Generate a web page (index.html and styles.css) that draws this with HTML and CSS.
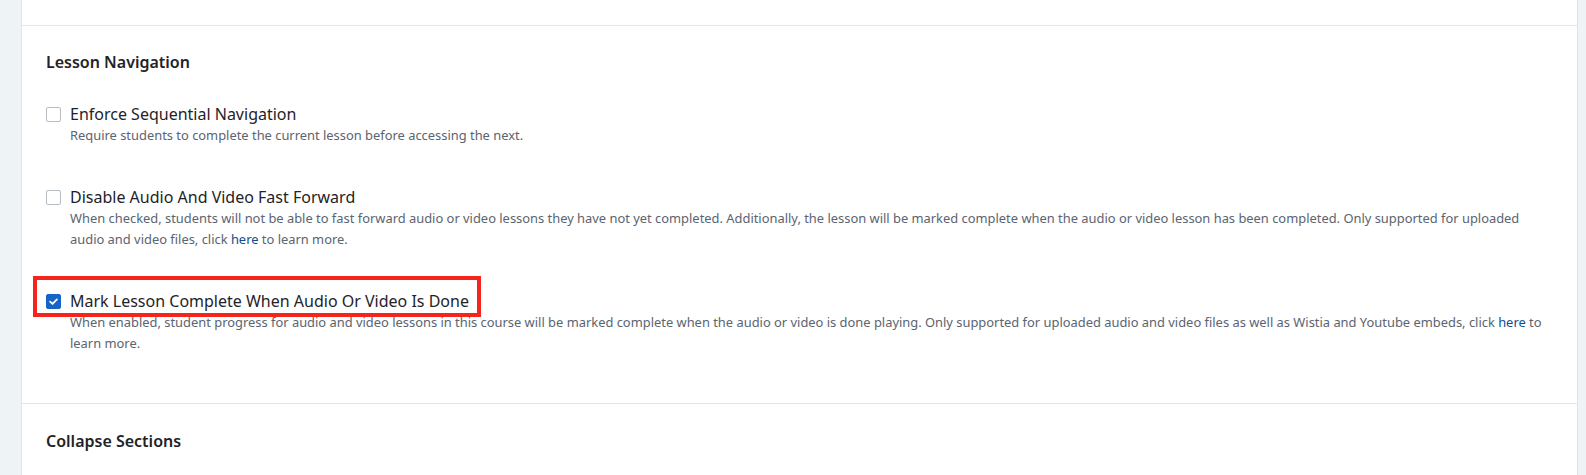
FILE: index.html
```html
<!DOCTYPE html>
<html lang="en">
<head>
<meta charset="utf-8">
<title>Lesson Navigation</title>
<link rel="stylesheet" href="styles.css">
</head>
<body>
<div class="page">
  <div class="card">
    <section class="section section-top"></section>
    <section class="section">
      <h2 class="section-title">Lesson Navigation</h2>
      <div class="options">
        <div class="option">
          <label class="option-row">
            <span class="checkbox"></span>
            <span class="option-title">Enforce Sequential Navigation</span>
          </label>
          <p class="option-desc">Require students to complete the current lesson before accessing the next.</p>
        </div>
        <div class="option">
          <label class="option-row">
            <span class="checkbox"></span>
            <span class="option-title">Disable Audio And Video Fast Forward</span>
          </label>
          <p class="option-desc">When checked, students will not be able to fast forward audio or video lessons they have not yet completed. Additionally, the lesson will be marked complete when the audio or video lesson has been completed. Only supported for uploaded audio and video files, click <a href="#">here</a> to learn more.</p>
        </div>
        <div class="option">
          <label class="option-row highlighted">
            <span class="checkbox checked">
              <svg viewBox="0 0 16 16" width="16" height="16"><path d="M3.8 8.2 L6.8 11 L12.2 5.4" fill="none" stroke="#fff" stroke-width="2.2" stroke-linecap="round" stroke-linejoin="round"/></svg>
            </span>
            <span class="option-title">Mark Lesson Complete When Audio Or Video Is Done</span>
            <span class="annotation"></span>
          </label>
          <p class="option-desc">When enabled, student progress for audio and video lessons in this course will be marked complete when the audio or video is done playing. Only supported for uploaded audio and video files as well as Wistia and Youtube embeds, click <a href="#">here</a> to learn more.</p>
        </div>
      </div>
    </section>
    <section class="section section-last">
      <h2 class="section-title">Collapse Sections</h2>
    </section>
  </div>
</div>
</body>
</html>
```

FILE: styles.css
```css
* { box-sizing: border-box; }

html, body {
  margin: 0;
  padding: 0;
  height: 475px;
  overflow: hidden;
}

body {
  background: #eef3f6;
  font-family: "Noto Sans", "Open Sans", "Liberation Sans", Arial, sans-serif;
  color: #1f2328;
}

.page {
  height: 100%;
  padding: 0 8px 0 21px;
}

.card {
  height: 100%;
  overflow: hidden;
  background: #fff;
  border-left: 1px solid #e1e3e5;
  border-right: 1px solid #e1e3e5;
}

.section {
  border-bottom: 1px solid #e3e5e7;
  padding: 26px 28px 49px 24px;
}

.section-top {
  height: 26px;
  padding: 0;
}

.section-last {
  border-bottom: none;
  padding-top: 27px;
  padding-bottom: 0;
}

.section-title {
  margin: 0;
  font-size: 16px;
  line-height: 21px;
  font-weight: 600;
  color: #1f2328;
}

.options {
  display: flex;
  flex-direction: column;
  gap: 41px;
  margin-top: 31px;
}

.option {
  display: flex;
  flex-direction: column;
  align-items: flex-start;
}

.option-row {
  position: relative;
  display: flex;
  align-items: center;
  gap: 9px;
}

.checkbox {
  flex: none;
  width: 15px;
  height: 15px;
  border: 1px solid #b7bdc4;
  border-radius: 2px;
  background: #fff;
  display: flex;
  align-items: center;
  justify-content: center;
}

.checkbox.checked {
  background: #1565c8;
  border-color: #1565c8;
}

.checkbox svg {
  width: 13px;
  height: 13px;
}

.option-title {
  font-size: 16px;
  line-height: 21px;
  color: #1f2328;
}

.option-desc {
  margin: 0;
  padding-left: 24px;
  font-size: 12.9px;
  line-height: 21px;
  color: #5b6470;
}

.option-desc a {
  color: #0d4c92;
  text-decoration: none;
}

.annotation {
  position: absolute;
  left: -13px;
  right: -12px;
  top: -15px;
  bottom: -5px;
  border: 4px solid #f5241c;
  pointer-events: none;
}
```
